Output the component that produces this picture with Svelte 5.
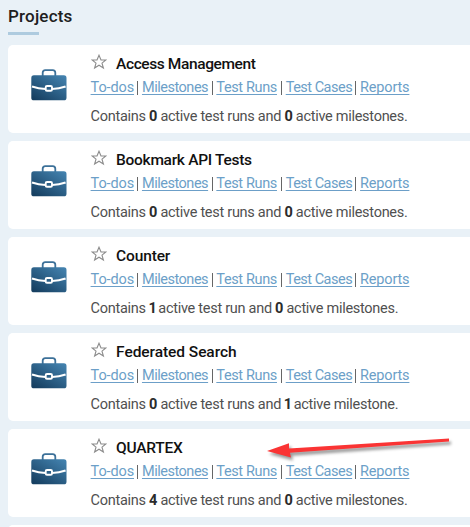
<script>
  const projects = [
    { name: 'Access Management', runs: 0, milestones: 0, tracking: -0.4 },
    { name: 'Bookmark API Tests', runs: 0, milestones: 0, tracking: -0.29 },
    { name: 'Counter', runs: 1, milestones: 0, tracking: -0.15 },
    { name: 'Federated Search', runs: 0, milestones: 1, tracking: -0.06 },
    { name: 'QUARTEX', runs: 4, milestones: 0, tracking: -0.25 },
    { name: '', runs: 0, milestones: 0, tracking: 0 }
  ];
  const links = ['To-dos', 'Milestones', 'Test Runs', 'Test Cases', 'Reports'];
</script>

<main>
  <h1>Projects</h1>
  <div class="list">
    {#each projects as p}
      <section class="card">
        {#if p.name}
          <svg class="case" viewBox="0 0 36 32" width="36" height="32">
            <defs>
              <linearGradient id="blue" x1="1" y1="0" x2="0.15" y2="1">
                <stop offset="0" stop-color="#4585b2" />
                <stop offset="1" stop-color="#163f61" />
              </linearGradient>
            </defs>
            <path d="M11.7 7V3.8Q11.7 1.2 14.3 1.2H21.7Q24.3 1.2 24.3 3.8V7" fill="none" stroke="#3d7199" stroke-width="1.8" />
            <rect x="0.3" y="6.3" width="35.2" height="25" rx="2.6" fill="url(#blue)" />
            <path d="M1 17.6Q7.5 20 14.5 20M21 20Q28 20 34.6 17.6" fill="none" stroke="#fff" stroke-width="2.1" />
            <rect x="14.7" y="17" width="6.3" height="4.8" rx="1.3" fill="#2c6088" stroke="#fff" stroke-width="1.9" />
          </svg>
          <div class="body">
            <div class="title">
              <svg class="star" viewBox="0 0 16 16" width="16" height="16">
                <path d="M8 1.2L10 6H14.9L11 9.1L12.4 14L8 11.2L3.6 14L5 9.1L1.1 6H6Z" fill="none" stroke="#8c8c8c" stroke-width="1.1" />
              </svg>
              <h2 style="letter-spacing: {p.tracking}px">{p.name}</h2>
            </div>
            <nav>
              {#each links as link, i}
                {#if i}<span class="bar"></span>{/if}<a class="l{i}" href="#top">{link}</a>
              {/each}
            </nav>
            <p>Contains <b class:one={p.runs === 1}>{p.runs}</b> active test {p.runs === 1 ? 'run' : 'runs'} and <b class:one={p.milestones === 1}>{p.milestones}</b> active {p.milestones === 1 ? 'milestone' : 'milestones'}.</p>
          </div>
        {/if}
      </section>
    {/each}
  </div>
  <svg class="arrow" viewBox="0 0 200 40" width="200" height="40">
    <path d="M7 21L29 13.3V18.5L189 8.4V11.6L30 22.8L31 27.4Z" fill="#fa3434" />
  </svg>
</main>

<style>
  main {
    position: relative;
    box-sizing: border-box;
    width: 470px;
    height: 527px;
    overflow: hidden;
    background: #e9f1f7;
    padding-left: 8px;
    font-family: Roboto, "Liberation Sans", sans-serif;
    color: #505050;
  }
  h1 {
    position: relative;
    margin: 0;
    height: 45px;
    box-sizing: border-box;
    padding-top: 6px;
    font-size: 17px;
    line-height: 20px;
    letter-spacing: 0.2px;
    font-weight: 500;
    color: #202020;
  }
  h1::after {
    content: "";
    position: absolute;
    left: 0;
    top: 32px;
    width: 31px;
    height: 2.5px;
    background: #aecbdf;
  }
  .list { display: flex; flex-direction: column; gap: 8px; }
  .card {
    display: flex;
    flex: none;
    height: 88px;
    box-sizing: border-box;
    background: #fff;
    border-radius: 5px 0 0 5px;
    padding-left: 23.2px;
  }
  .case { flex: none; margin-top: 24px; }
  .body { margin-left: 23.4px; padding-top: 8px; white-space: nowrap; }
  .title { display: flex; height: 23px; }
  .star { flex: none; margin-top: 1px; }
  h2 {
    margin: 0 0 0 9.5px;
    font-size: 15.5px;
    line-height: 22px;
    font-weight: 500;
    color: #111;
  }
  nav { display: flex; height: 24px; align-items: center; }
  a {
    flex: none;
    font-size: 14.5px;
    line-height: 24px;
    color: #6c9fc8;
    text-decoration: underline;
    text-underline-offset: 2px;
    text-decoration-thickness: 1px;
    text-decoration-skip-ink: none;
    font-weight: 400;
  }
  .l0 { width: 43px; letter-spacing: -0.12px; }
  .l1 { width: 66px; letter-spacing: -0.48px; }
  .l2 { width: 61px; letter-spacing: -0.36px; }
  .l3 { width: 66px; letter-spacing: -0.5px; }
  .l4 { width: 49px; letter-spacing: -0.17px; }
  .bar { flex: none; width: 1px; height: 14px; margin: 0 3.7px; background: #666; }
  p {
    margin: 6px 0 0;
    font-size: 14.5px;
    line-height: 22px;
    letter-spacing: -0.28px;
  }
  b { font-weight: 700; color: #2b2b2b; }
  b.one { margin: 0 -1.5px 0 -0.6px; }
  .arrow {
    position: absolute;
    left: 260px;
    top: 429.5px;
    filter: drop-shadow(2px 3px 1.5px rgba(0, 0, 0, 0.4));
  }
</style>
